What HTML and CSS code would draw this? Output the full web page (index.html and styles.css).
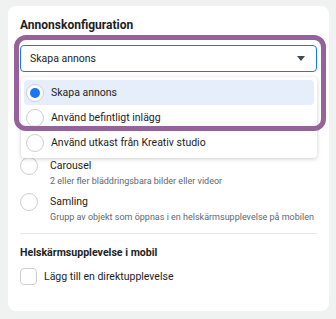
FILE: index.html
```html
<!DOCTYPE html>
<html lang="sv">
<head>
<meta charset="utf-8">
<title>Annonskonfiguration</title>
<link rel="stylesheet" href="styles.css">
</head>
<body>
<div class="card">
  <h2 class="section-title">Annonskonfiguration</h2>
  <div class="select-wrap">
    <div class="select">
      <span class="select-value">Skapa annons</span>
      <span class="caret"></span>
    </div>
    <ul class="menu">
      <li class="menu-item active"><span class="radio checked"></span><span>Skapa annons</span></li>
      <li class="menu-item"><span class="radio"></span><span>Använd befintligt inlägg</span></li>
      <li class="menu-item"><span class="radio"></span><span>Använd utkast från Kreativ studio</span></li>
    </ul>
  </div>
  <div class="formats">
    <div class="option">
      <span class="radio"></span>
      <div class="option-text">
        <div class="option-title">Carousel</div>
        <div class="option-sub">2 eller fler bläddringsbara bilder eller videor</div>
      </div>
    </div>
    <div class="option">
      <span class="radio"></span>
      <div class="option-text">
        <div class="option-title">Samling</div>
        <div class="option-sub">Grupp av objekt som öppnas i en helskärmsupplevelse på mobilen</div>
      </div>
    </div>
  </div>
  <div class="divider"></div>
  <h3 class="sub-title">Helskärmsupplevelse i mobil</h3>
  <div class="check-row"><span class="checkbox"></span><span>Lägg till en direktupplevelse</span></div>
  <div class="annotation"></div>
</div>
</body>
</html>
```

FILE: styles.css
```css
* { box-sizing: border-box; }
html, body { margin: 0; }
body {
  background: #f0f2f2;
  padding: 6px 7px 0 8px;
  font-family: Roboto, "Liberation Sans", Arial, sans-serif;
  color: #1c1e21;
  font-size: 10.5px;
}
.card {
  position: relative;
  background: #fff;
  border-radius: 8px;
  padding: 11px 12px 26px 12px;
  height: 305px;
}
.section-title {
  margin: 0;
  font-size: 12px;
  line-height: 16px;
  font-weight: 700;
  color: #1c1e21;
}
.sub-title {
  margin: 0;
  font-size: 10.6px;
  line-height: 16px;
  font-weight: 700;
  color: #1c1e21;
}
.select-wrap {
  position: relative;
  margin-top: 12px;
}
.select {
  height: 27px;
  border: 1px solid #1877f2;
  border-radius: 4px;
  display: flex;
  align-items: center;
  justify-content: space-between;
  padding: 0 11px 0 9px;
}
.caret {
  width: 0; height: 0;
  border-left: 4px solid transparent;
  border-right: 4px solid transparent;
  border-top: 5px solid #444950;
}
.menu {
  position: absolute;
  left: 1px; right: 0;
  top: 32px;
  margin: 0;
  list-style: none;
  background: #fff;
  border-radius: 4px;
  box-shadow: 0 1px 4px rgba(0,0,0,0.2);
  padding: 3px;
  z-index: 1;
}
.menu-item {
  height: 25px;
  display: flex;
  align-items: center;
  gap: 7px;
  padding-left: 2px;
  border-radius: 4px;
}
.menu-item.active { background: #e6eefb; }
.radio {
  flex: none;
  width: 18px; height: 18px;
  border: 1px solid #ccd0d5;
  border-radius: 50%;
  background: #fff;
  display: inline-flex;
  align-items: center;
  justify-content: center;
}
.radio.checked::after {
  content: "";
  width: 10px; height: 10px;
  border-radius: 50%;
  background: #1877f2;
}
.formats {
  margin-top: 86px;
  display: flex;
  flex-direction: column;
  gap: 6px;
}
.option {
  display: flex;
  align-items: flex-start;
  gap: 12px;
}
.option .radio { margin-top: -1px; }
.option-title { line-height: 16px; }
.option-sub { font-size: 9px; line-height: 14px; color: #606770; white-space: nowrap; }
.divider {
  height: 1px;
  background: #e4e6e9;
  margin: 9px 0 11px;
}
.check-row {
  margin-top: 7px;
  display: flex;
  align-items: center;
  gap: 7px;
}
.checkbox {
  width: 17px; height: 17px;
  border: 1px solid #ccd0d5;
  border-radius: 4px;
}
.annotation {
  position: absolute;
  left: 6px; top: 29px;
  width: 312px; height: 96px;
  border: 5px solid #96629b;
  border-radius: 12px;
  z-index: 2;
  pointer-events: none;
}
```
